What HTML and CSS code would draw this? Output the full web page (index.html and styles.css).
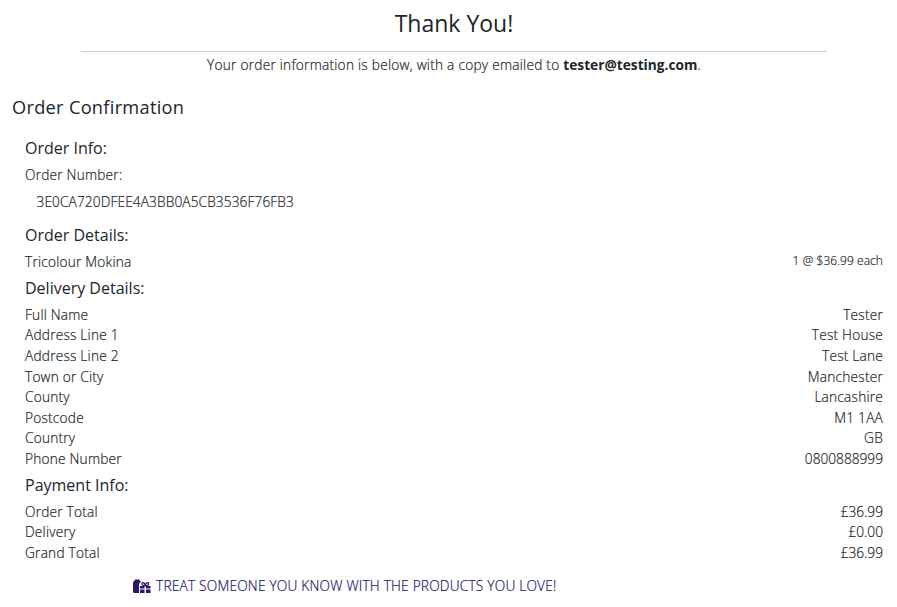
FILE: index.html
```html
<!DOCTYPE html>
<html lang="en">
<head>
<meta charset="utf-8">
<title>Thank You</title>
<link rel="stylesheet" href="styles.css">
</head>
<body>
<header class="intro">
<h1>Thank You!</h1>
<hr>
<p>Your order information is below, with a copy emailed to <strong>tester@testing.com</strong>.</p>
</header>
<main>
<h2>Order Confirmation</h2>
<div class="order">
<h3>Order Info:</h3>
<p class="label">Order Number:</p>
<p class="number">3E0CA720DFEE4A3BB0A5CB3536F76FB3</p>
<h3>Order Details:</h3>
<div class="row"><span>Tricolour Mokina</span><small>1 @ $36.99 each</small></div>
<h3>Delivery Details:</h3>
<div class="row"><span>Full Name</span><span>Tester</span></div>
<div class="row"><span>Address Line 1</span><span>Test House</span></div>
<div class="row"><span>Address Line 2</span><span>Test Lane</span></div>
<div class="row"><span>Town or City</span><span>Manchester</span></div>
<div class="row"><span>County</span><span>Lancashire</span></div>
<div class="row"><span>Postcode</span><span>M1 1AA</span></div>
<div class="row"><span>Country</span><span>GB</span></div>
<div class="row"><span>Phone Number</span><span class="figure">0800888999</span></div>
<h3>Payment Info:</h3>
<div class="row"><span>Order Total</span><span class="figure">£36.99</span></div>
<div class="row"><span>Delivery</span><span class="figure">£0.00</span></div>
<div class="row"><span>Grand Total</span><span class="figure">£36.99</span></div>
</div>
<a class="promo"><svg viewBox="0 0 18 14" width="18" height="14"><path fill="currentColor" d="M1.500 1.500 3 0l1 1 1.500-1L8 2.500 6 5v9H1.500Q0 14 0 12.500V4q0-1.500 1.500-2.500zM7 7h4.500v2.500H7zM13 7h4.500v2.500H13zM7 10.500h4.500V14H7zM13 10.500h4.500V14H13z"/><path fill="none" stroke="currentColor" stroke-width="1.200" d="M12.300 6.800C9 7 8 4 9.800 3.700c1.300-.2 2.200 1.400 2.500 3.100.3-1.700 1.200-3.300 2.500-3.100 1.800.3.800 3.300-2.500 3.100z"/></svg><span>TREAT SOMEONE YOU KNOW WITH THE PRODUCTS YOU LOVE!</span></a>
</main>
</body>
</html>
```
FILE: styles.css
```css
* { box-sizing: border-box; }
body { margin: 0; height: 607px; overflow: hidden; background: #fff; color: #212529; font: 300 13.7px/20.57px "Open Sans", sans-serif; }
h1, h2, h3, p { margin: 0; font-weight: 400; }
.intro { padding: 8px 0 0 11px; text-align: center; }
h1 { font-size: 23px; line-height: 31px; }
hr { width: 746px; height: 1px; margin: 12px 0 3px 70px; border: 0; background: #c8d3d3; }
.intro p, .label, .number, .row, .promo { font-weight: 300; letter-spacing: .21px; -webkit-text-stroke: .2px currentColor; }
.intro p { letter-spacing: .245px; }
.intro strong { font-weight: 700; letter-spacing: .02px; -webkit-text-stroke: 0; }
main { padding: 20px 14px 0 12px; }
h2 { font-size: 18.2px; line-height: 22px; letter-spacing: .3px; }
.order { padding: 14.600px 0 0 13px; }
h3 { margin: 5.400px 0 7px; font-size: 16px; line-height: 20px; }
.number { margin: 6.500px 0 12.700px 11.500px; letter-spacing: .11px; }
.row { display: flex; justify-content: space-between; }
.row .figure { letter-spacing: 0; }
.row small { font-size: 12px; letter-spacing: .05px; position: relative; top: -1px; }
.promo { display: flex; align-items: center; gap: 5px; margin: 12.300px 0 0 121px; color: #20206b; letter-spacing: .205px; }
.promo svg { color: #2c1467; }
```
